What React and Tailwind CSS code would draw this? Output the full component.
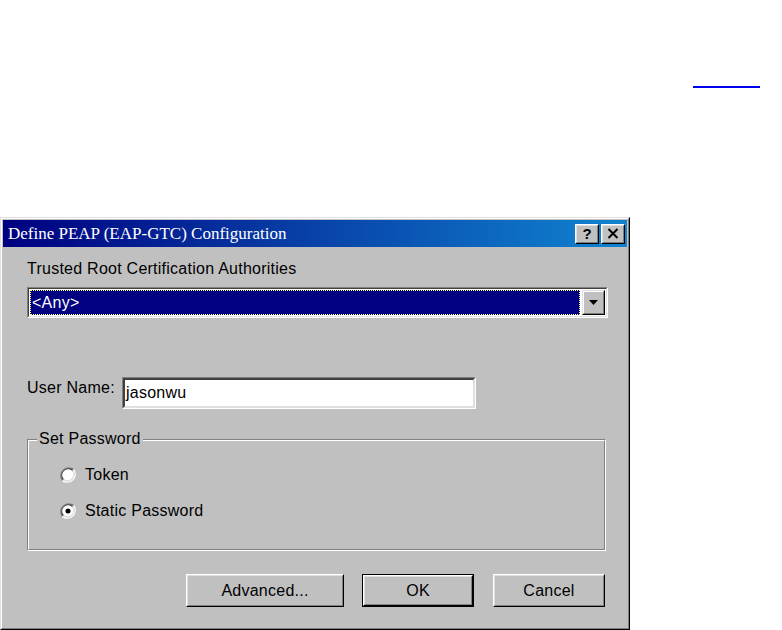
import React from "react";

const sans = { fontFamily: '"Liberation Sans", Arial, sans-serif' };

function Radio({ checked }) {
  return (
    <svg width="16" height="16" viewBox="0 0 12 12" className="shrink-0">
      <path d="M10.2 1.8 A6 6 0 0 0 1.8 10.2" fill="none" stroke="#808080" strokeWidth="1" />
      <path d="M9.5 2.5 A5 5 0 0 0 2.5 9.5" fill="none" stroke="#404040" strokeWidth="1" />
      <circle cx="6" cy="6" r="4.3" fill="#fff" />
      <path d="M1.8 10.2 A6 6 0 0 0 10.2 1.8" fill="none" stroke="#ffffff" strokeWidth="1" />
      <path d="M2.5 9.5 A5 5 0 0 0 9.5 2.5" fill="none" stroke="#dfdfdf" strokeWidth="1" />
      {checked && <circle cx="6" cy="6" r="1.9" fill="#000" />}
    </svg>
  );
}

function Btn({ children, w, def }) {
  const inner = (
    <div className="h-full w-full border border-t-white border-l-white border-r-black border-b-black">
      <div className="h-full w-full border border-t-[#dfdfdf] border-l-[#dfdfdf] border-r-[#808080] border-b-[#808080] flex items-center justify-center text-[16px] tracking-[0.25px] text-black bg-[#c0c0c0]">
        {children}
      </div>
    </div>
  );
  return (
    <div className={`${w} h-[33px] ${def ? "border border-black" : ""}`}>{inner}</div>
  );
}

function TitleBtn({ children }) {
  return (
    <div className="w-[24px] h-[20px] border border-t-white border-l-white border-r-black border-b-black bg-[#c0c0c0]">
      <div className="h-full w-full border border-t-[#dfdfdf] border-l-[#dfdfdf] border-r-[#808080] border-b-[#808080] flex items-center justify-center">
        {children}
      </div>
    </div>
  );
}

export default function App() {
  return (
    <div className="w-[782px] h-[630px] bg-white overflow-hidden" style={sans}>
      <div className="h-[217px] pt-[86px]">
        <div className="ml-[693px] w-[67px] h-[2px] bg-[#0000ee]" />
      </div>
      <div className="w-[630px] h-[413px] border border-t-[#dfdfdf] border-l-[#dfdfdf] border-r-black border-b-black">
        <div className="h-full w-full border border-t-white border-l-white border-r-[#808080] border-b-[#808080] bg-[#c0c0c0] p-px flex flex-col">
          {/* title bar */}
          <div className="h-[27px] shrink-0 flex items-center justify-between pl-[5px] pr-[2px] bg-[linear-gradient(90deg,#000080,#1084d0)]">
            <span
              className="text-white text-[17px] leading-none"
              style={{ fontFamily: '"Liberation Serif", "Times New Roman", serif' }}
            >
              Define PEAP (EAP-GTC) Configuration
            </span>
            <div className="flex gap-[2px]">
              <TitleBtn>
                <span className="text-[15px] font-bold leading-none text-black">?</span>
              </TitleBtn>
              <TitleBtn>
                <svg width="12" height="11" viewBox="0 0 12 11">
                  <path d="M1.5 1 L10.5 10 M10.5 1 L1.5 10" stroke="#000" strokeWidth="2" />
                </svg>
              </TitleBtn>
            </div>
          </div>

          {/* content */}
          <div className="flex flex-col pl-[24px] pr-[21px] text-black text-[16px] tracking-[0.25px]">
            <div className="mt-[13px] h-[18px] leading-[18px]">Trusted Root Certification Authorities</div>

            {/* combo */}
            <div className="mt-[9px] w-[581px] h-[31px] border border-t-[#808080] border-l-[#808080] border-r-white border-b-white">
              <div className="h-full w-full border border-t-[#404040] border-l-[#404040] border-r-[#dfdfdf] border-b-[#dfdfdf] bg-white flex p-px">
                <div className="flex-1 bg-[#000080] border border-dotted border-[#ffff80] flex items-center pl-[1px] text-white">
                  &lt;Any&gt;
                </div>
                <div className="w-[23px] ml-[2px] border border-t-[#dfdfdf] border-l-[#dfdfdf] border-r-black border-b-black bg-[#c0c0c0]">
                  <div className="h-full w-full border border-t-white border-l-white border-r-[#808080] border-b-[#808080] flex items-center justify-center">
                    <svg width="9" height="5" viewBox="0 0 9 5">
                      <path d="M0 0 H9 L4.5 5 Z" fill="#000" />
                    </svg>
                  </div>
                </div>
              </div>
            </div>

            {/* user name */}
            <div className="mt-[59px] flex items-start">
              <div className="w-[95px] pt-[2px] leading-[18px]">User Name:</div>
              <div className="w-[354px] h-[32px] border border-t-[#808080] border-l-[#808080] border-r-white border-b-white">
                <div className="h-full w-full border-2 border-t-[#404040] border-l-[#404040] border-r-[#dfdfdf] border-b-[#dfdfdf] bg-white flex items-center pl-[1px]">
                  jasonwu
                </div>
              </div>
            </div>

            {/* group box */}
            <div className="mt-[30px] w-[579px] h-[112px] border border-t-[#808080] border-l-[#808080] border-r-white border-b-white">
              <div className="h-full w-full border border-t-white border-l-white border-r-[#808080] border-b-[#808080] flex flex-col">
                <div className="-mt-[11px] ml-[8px] self-start bg-[#c0c0c0] px-[2px] leading-[18px]">Set Password</div>
                <div className="mt-[18px] ml-[31px] flex items-center gap-[9px] h-[18px]">
                  <Radio />
                  <span>Token</span>
                </div>
                <div className="mt-[18px] ml-[31px] flex items-center gap-[9px] h-[18px]">
                  <Radio checked />
                  <span>Static Password</span>
                </div>
              </div>
            </div>

            {/* buttons */}
            <div className="mt-[23px] flex justify-end pr-[1px]">
              <Btn w="w-[158px]">Advanced...</Btn>
              <div className="w-[18px]" />
              <Btn w="w-[112px]" def>OK</Btn>
              <div className="w-[19px]" />
              <Btn w="w-[112px]">Cancel</Btn>
            </div>
          </div>
        </div>
      </div>
    </div>
  );
}
